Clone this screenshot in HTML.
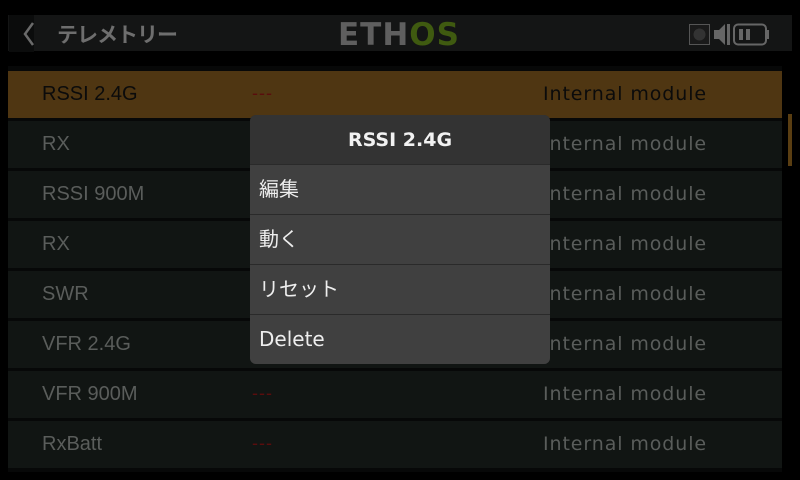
<!DOCTYPE html>
<html><head><meta charset="utf-8"><style>
body{margin:0;width:800px;height:480px;background:#000;position:relative;overflow:hidden;font-family:"Liberation Sans","Noto Sans CJK JP",sans-serif}
.hdr{position:absolute;left:8px;top:15px;width:784px;height:36px;background:#141515}
.back{position:absolute;left:9px;top:15px;width:25px;height:37px;background:#0b0c0c}
.title{position:absolute;left:57px;top:19px;font-size:21px;color:#6e6e6e;letter-spacing:-1px;font-weight:bold}
.logo{position:absolute;left:338px;top:17px;font-size:31px;font-weight:bold;color:#5f5f5f;letter-spacing:1px;font-family:"DejaVu Sans",sans-serif}
.list{position:absolute;left:8px;top:66px;width:774px;height:406px;background:#070808}
.row{position:absolute;left:8px;width:774px;height:47px;background:#111513}
.row span{position:absolute;top:12px;font-size:20px;color:#5a5d5b}
.n{left:34px}.d{left:244px;color:#5a0d0d!important;font-size:18px!important;top:12px!important;letter-spacing:1px}.m{left:535px;font-family:"DejaVu Sans",sans-serif;font-size:19px!important;letter-spacing:0.9px}
.sel{background:#4f3612}.sel span{color:#0b0b0b}
.sb{position:absolute;left:788px;top:114px;width:4px;height:52px;background:#5a3e12}
.pop{position:absolute;left:250px;top:115px;width:300px;height:249px;background:#2a2a2a;border-radius:6px;overflow:hidden}
.ph{position:absolute;left:0;top:0;width:300px;height:49px;background:#333;color:#f2f2f2;font-weight:bold;font-size:19px;text-align:center;line-height:50px;font-family:"DejaVu Sans",sans-serif}
.pi{position:absolute;left:0;width:300px;height:49px;background:#404040;color:#eee;font-size:20px;line-height:48px;padding-left:9px;box-sizing:border-box;font-family:"DejaVu Sans","Noto Sans CJK JP",sans-serif}
</style></head><body>
<div class="hdr"></div><div class="back"></div>
<svg style="position:absolute;left:22px;top:21px" width="14" height="26"><path d="M11 2 L3 13 L11 24" stroke="#6a6a6a" stroke-width="2.5" fill="none"/></svg>
<div class="title">テレメトリー</div>
<div class="logo">ETH<span style="color:#3f5a10">OS</span></div>
<svg style="position:absolute;left:688px;top:21px" width="100" height="26">
<rect x="1.5" y="3.5" width="20" height="20" fill="#1a1a1a" stroke="#555"/><circle cx="11.5" cy="13.5" r="6" fill="#333"/>
<path d="M26 9 H31 L37 3 V24 L31 18 H26Z" fill="#666"/><rect x="39" y="3" width="3" height="21" fill="#666"/>
<rect x="46" y="3.5" width="32" height="20" rx="4" fill="none" stroke="#666" stroke-width="2"/><rect x="78" y="9" width="3" height="9" fill="#666"/>
<rect x="51" y="8" width="4" height="11" fill="#666"/><rect x="58" y="8" width="4" height="11" fill="#666"/></svg>
<div class="list"></div>
<div class="row sel" style="top:71px"><span class="n">RSSI 2.4G</span><span class="d">---</span><span class="m">Internal module</span></div>
<div class="row" style="top:121px"><span class="n">RX</span><span class="d">---</span><span class="m">Internal module</span></div>
<div class="row" style="top:171px"><span class="n">RSSI 900M</span><span class="d">---</span><span class="m">Internal module</span></div>
<div class="row" style="top:221px"><span class="n">RX</span><span class="d">---</span><span class="m">Internal module</span></div>
<div class="row" style="top:271px"><span class="n">SWR</span><span class="d">---</span><span class="m">Internal module</span></div>
<div class="row" style="top:321px"><span class="n">VFR 2.4G</span><span class="d">---</span><span class="m">Internal module</span></div>
<div class="row" style="top:371px"><span class="n">VFR 900M</span><span class="d">---</span><span class="m">Internal module</span></div>
<div class="row" style="top:421px"><span class="n">RxBatt</span><span class="d">---</span><span class="m">Internal module</span></div>
<div class="sb"></div>
<div class="pop">
<div class="ph">RSSI 2.4G</div>
<div class="pi" style="top:50px">編集</div>
<div class="pi" style="top:100px">動く</div>
<div class="pi" style="top:150px">リセット</div>
<div class="pi" style="top:200px">Delete</div>
</div>
</body></html>
